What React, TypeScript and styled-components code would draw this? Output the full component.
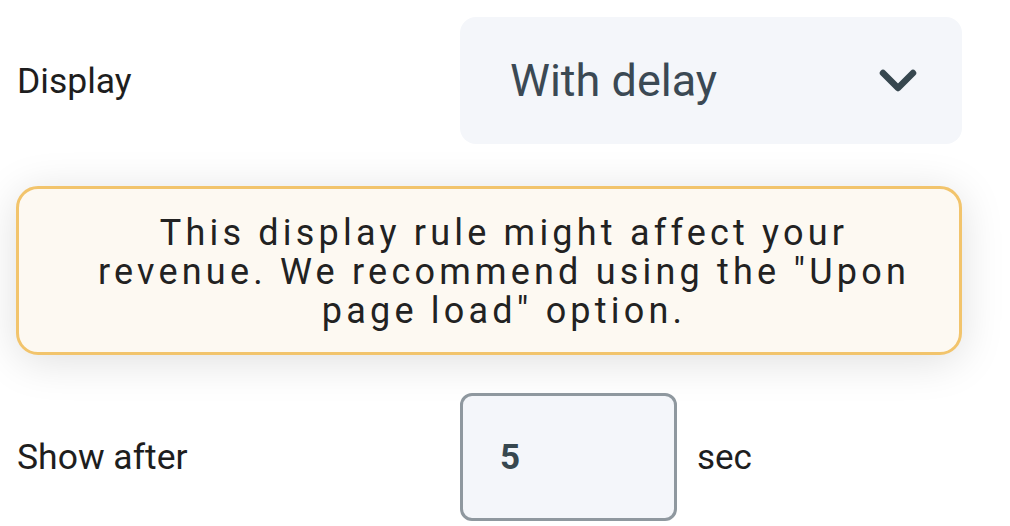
import styled, { createGlobalStyle } from "styled-components";

const GlobalStyle = createGlobalStyle`
  body {
    margin: 0;
    background: #ffffff;
    font-family: Roboto, "Liberation Sans", sans-serif;
  }
`;

export default function App() {
  return (
    <>
      <GlobalStyle />
      <Panel>
        <Row>
          <Label>Display</Label>
          <Select>
            <SelectValue>With delay</SelectValue>
            <svg width="40" height="28" viewBox="0 0 40 28">
              <polyline
                points="5,6 20,21 35,6"
                fill="none"
                stroke="#37474f"
                strokeWidth="6.5"
                strokeLinecap="round"
                strokeLinejoin="round"
              />
            </svg>
          </Select>
        </Row>

        <Warning>
          This display rule might affect your revenue. We recommend using the "Upon page load" option.
        </Warning>

        <Row>
          <Label>Show after</Label>
          <DelayGroup>
            <NumberBox>5</NumberBox>
            <Unit>sec</Unit>
          </DelayGroup>
        </Row>
      </Panel>
    </>
  );
}

const Panel = styled.div`
  display: flex;
  flex-direction: column;
  width: 946px;
  padding: 17px 0 0 16px;
  gap: 42px;

  > :last-child {
    margin-top: -4px;
  }
`;

const Row = styled.div`
  display: grid;
  grid-template-columns: 444px 1fr;
  align-items: center;
`;

const Label = styled.div`
  font-size: 35.5px;
  color: #1e1e1e;
  padding-left: 1px;
`;

const Select = styled.div`
  display: flex;
  align-items: center;
  justify-content: space-between;
  height: 127px;
  padding: 0 44px 0 50px;
  background: #f4f6fa;
  border-radius: 16px;
`;

const SelectValue = styled.span`
  font-size: 45px;
  color: #3b4954;
`;

const Warning = styled.div`
  background: #fdf9f2;
  border: 3px solid #f2c46c;
  border-radius: 22px;
  padding: 25px 40px 21px 70px;
  text-align: center;
  font-size: 36px;
  line-height: 39px;
  letter-spacing: 4.2px;
  color: #222222;
  box-shadow: 0 6px 44px rgba(0, 0, 0, 0.13);
`;

const DelayGroup = styled.div`
  display: flex;
  align-items: center;
  gap: 20px;
`;

const NumberBox = styled.div`
  width: 211px;
  height: 122px;
  box-sizing: content-box;
  display: flex;
  align-items: center;
  text-indent: 37px;
  background: #f4f6fa;
  border: 3px solid #8f989f;
  border-radius: 12px;
  font-size: 35px;
  font-weight: 700;
  color: #37474f;
`;

const Unit = styled.span`
  font-size: 35px;
  color: #1e1e1e;
`;
